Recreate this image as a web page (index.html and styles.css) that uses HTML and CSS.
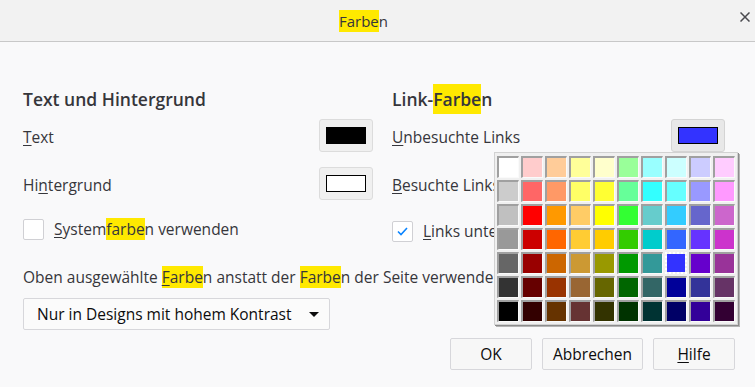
FILE: index.html
```html
<!doctype html>
<html>
	<head>
		<title>Farben</title>
		<link rel="stylesheet" href="styles.css">
	</head>
	<body>
		<div class='titlebar'>
			<span class='title'><mark>Farbe</mark>n</span>
			<svg class='close' width='10' height='10' viewBox='0 0 10 10'>
				<path d='M0.5 0.5 L9.5 9.5 M9.5 0.5 L0.5 9.5'/>
			</svg>
		</div>
		<div class='content'>
			<div class='columns'>
				<div class='group'>
					<h2>Text und Hintergrund</h2>
					<div class='row'>
						<span class='label'><u>T</u>ext</span>
						<div class='color-btn'><span class='swatch black'></span></div>
					</div>
					<div class='row'>
						<span class='label'>Hi<u>n</u>tergrund</span>
						<div class='color-btn'><span class='swatch white'></span></div>
					</div>
					<div class='check'>
						<span class='box'></span>
						<span class='label'><u>S</u>ystem<mark>farbe</mark>n verwenden</span>
					</div>
				</div>
				<div class='group links'>
					<h2>Link-<mark>Farbe</mark>n</h2>
					<div class='row'>
						<span class='label'><u>U</u>nbesuchte Links</span>
						<div class='picker'>
							<div class='color-btn open'><span class='swatch blue'></span></div>
							<div class='palette' id='palette'></div>
						</div>
					</div>
					<div class='row'>
						<span class='label'><u>B</u>esuchte Links</span>
						<div class='color-btn'><span class='swatch purple'></span></div>
					</div>
					<div class='check'>
						<span class='box'>
							<svg width='11' height='9' viewBox='0 0 11 9'>
								<path d='M1 4.5 L4 7.5 L10 1'/>
							</svg>
						</span>
						<span class='label'><u>L</u>inks unterstreichen</span>
					</div>
				</div>
			</div>
			<p class='override'>Oben ausgewählte <u><mark>F</mark></u><mark>arbe</mark>n anstatt der <mark>Farbe</mark>n der Seite verwenden</p>
			<div class='select'>
				<span>Nur in Designs mit hohem Kontrast</span>
				<span class='arrow'></span>
			</div>
		</div>
		<div class='buttons'>
			<div class='btn'>OK</div>
			<div class='btn'>Abbrechen</div>
			<div class='btn'><u>H</u>ilfe</div>
		</div>
		<script>
			var colors = [
				'#FFFFFF','#FFCCCC','#FFCC99','#FFFF99','#FFFFCC','#99FF99','#99FFFF','#CCFFFF','#CCCCFF','#FFCCFF',
				'#CCCCCC','#FF6666','#FF9966','#FFFF66','#FFFF33','#66FF99','#33FFFF','#66FFFF','#9999FF','#FF99FF',
				'#C0C0C0','#FF0000','#FF9900','#FFCC66','#FFFF00','#33FF33','#66CCCC','#33CCFF','#6666CC','#CC66CC',
				'#999999','#CC0000','#FF6600','#FFCC33','#FFCC00','#33CC00','#00CCCC','#3366FF','#6633FF','#CC33CC',
				'#666666','#990000','#CC6600','#CC9933','#999900','#009900','#339999','#3333FF','#6600CC','#993399',
				'#333333','#660000','#993300','#996633','#666600','#006600','#336666','#000099','#333399','#663366',
				'#000000','#330000','#663300','#663333','#333300','#003300','#003333','#000066','#330099','#330033'
			];
			var palette = document.getElementById('palette');
			for (var i = 0; i < colors.length; i++) {
				var cell = document.createElement('span');
				cell.className = colors[i] == '#3333FF' ? 'cell selected' : 'cell';
				cell.style.backgroundColor = colors[i];
				palette.appendChild(cell);
			}
		</script>
	</body>
</html>
```
FILE: styles.css
```css
body {
	margin : 0;
	background-color : #f9f9fa;
	color : #36363b;
	font-family : 'Open Sans', sans-serif;
	font-size : 15.5px;
}
mark {
	background-color : #ffe900;
	color : inherit;
}
u {
	text-decoration-thickness : 1px;
	text-underline-offset : 2px;
}
div.titlebar {
	height : 41px;
	background-color : #f2f2f2;
	border-bottom : 1px solid #c8c8c8;
	display : flex;
	align-items : center;
	justify-content : center;
	position : relative;
}
span.title {
	font-size : 15px;
	line-height : 22px;
	margin-right : 28px;
}
span.title mark {
	display : inline-block;
	line-height : 22px;
}
svg.close {
	position : absolute;
	right : 5px;
	top : 12px;
}
svg.close path {
	stroke : #4a4a4f;
	stroke-width : 1.5;
	fill : none;
}
div.content {
	padding : 46px 20px 0 23px;
}
div.columns {
	display : grid;
	grid-template-columns : 350px 333px;
	column-gap : 19px;
}
h2 {
	margin : 0 0 8px 0;
	font-size : 17.5px;
	font-weight : 600;
	line-height : 23px;
}
h2 mark {
	padding : 3px 0;
}
div.row {
	display : flex;
	align-items : center;
	justify-content : space-between;
	margin-bottom : 15px;
}
div.links div.row:first-of-type {
	margin-top : 4px;
}
span.label {
	line-height : 20px;
	padding-top : 3px;
}
div.color-btn {
	width : 40px;
	height : 17px;
	padding : 7px 6px 7px 6px;
	background-color : #f0f0f0;
	border : 1px solid #dcdcdc;
	border-radius : 3px;
}
div.color-btn.open {
	background-color : #e8e8e8;
	border-color : #d4d4d4;
}
span.swatch {
	display : block;
	box-sizing : border-box;
	width : 40px;
	height : 17px;
	border : 1px solid #000;
}
.black { background-color : #000; }
.white { background-color : #fff; }
.blue { background-color : #3333ff; }
.purple { background-color : #551a8b; }
div.picker {
	position : relative;
}
div.palette {
	position : absolute;
	top : 100%;
	right : -13px;
	z-index : 2;
	display : grid;
	grid-template-columns : repeat(10, 22px);
	grid-auto-rows : 22px;
	gap : 2px;
	padding : 3px 2px 2px 2px;
	background-color : #f0f0f0;
	border : 1px solid #d2d2d2;
	box-shadow : 1px 1px 0 #8c8c8c, 2px 2px 0 #b4b4b4;
}
span.cell {
	box-sizing : border-box;
	border-top : 2px solid #a0a0a0;
	border-left : 2px solid #a0a0a0;
	border-right : 1px solid #fafafa;
	border-bottom : 1px solid #fafafa;
}
span.cell.selected {
	border : 2px dotted #ffffff;
	background-clip : padding-box;
	outline : 1px solid #f0f0f0;
}
div.check {
	display : flex;
	align-items : center;
	margin-top : 19px;
}
div.links div.check {
	margin-top : 21px;
}
span.box {
	box-sizing : border-box;
	width : 21px;
	height : 21px;
	border : 1px solid #d0d0d4;
	border-radius : 2px;
	background-color : #fff;
	margin-right : 10px;
	display : flex;
	align-items : center;
	justify-content : center;
}
div.check span.label {
	padding-top : 0;
	margin-top : -2px;
}
span.box path {
	stroke : #0a84ff;
	stroke-width : 1.6;
	fill : none;
}
p.override {
	margin : 24px 0 0 0;
	line-height : 22px;
	white-space : nowrap;
}
div.select {
	width : 307px;
	height : 32px;
	box-sizing : border-box;
	margin-top : 10px;
	padding : 0 10px 0 13px;
	display : flex;
	align-items : center;
	justify-content : space-between;
	background-color : #fbfbfb;
	border : 1px solid #d7d7db;
	border-radius : 2px;
	color : #0c0c0d;
}
span.arrow {
	width : 0;
	height : 0;
	border-left : 5px solid transparent;
	border-right : 5px solid transparent;
	border-top : 5px solid #0c0c0d;
}
div.buttons {
	display : flex;
	justify-content : flex-end;
	gap : 10px;
	padding : 8px 20px 0 0;
}
div.btn {
	min-width : 82px;
	height : 32px;
	box-sizing : border-box;
	padding : 0 10px;
	display : flex;
	align-items : center;
	justify-content : center;
	background-color : #f7f7f7;
	border : 1px solid #d7d7db;
	border-radius : 2px;
	color : #0c0c0d;
}
```
